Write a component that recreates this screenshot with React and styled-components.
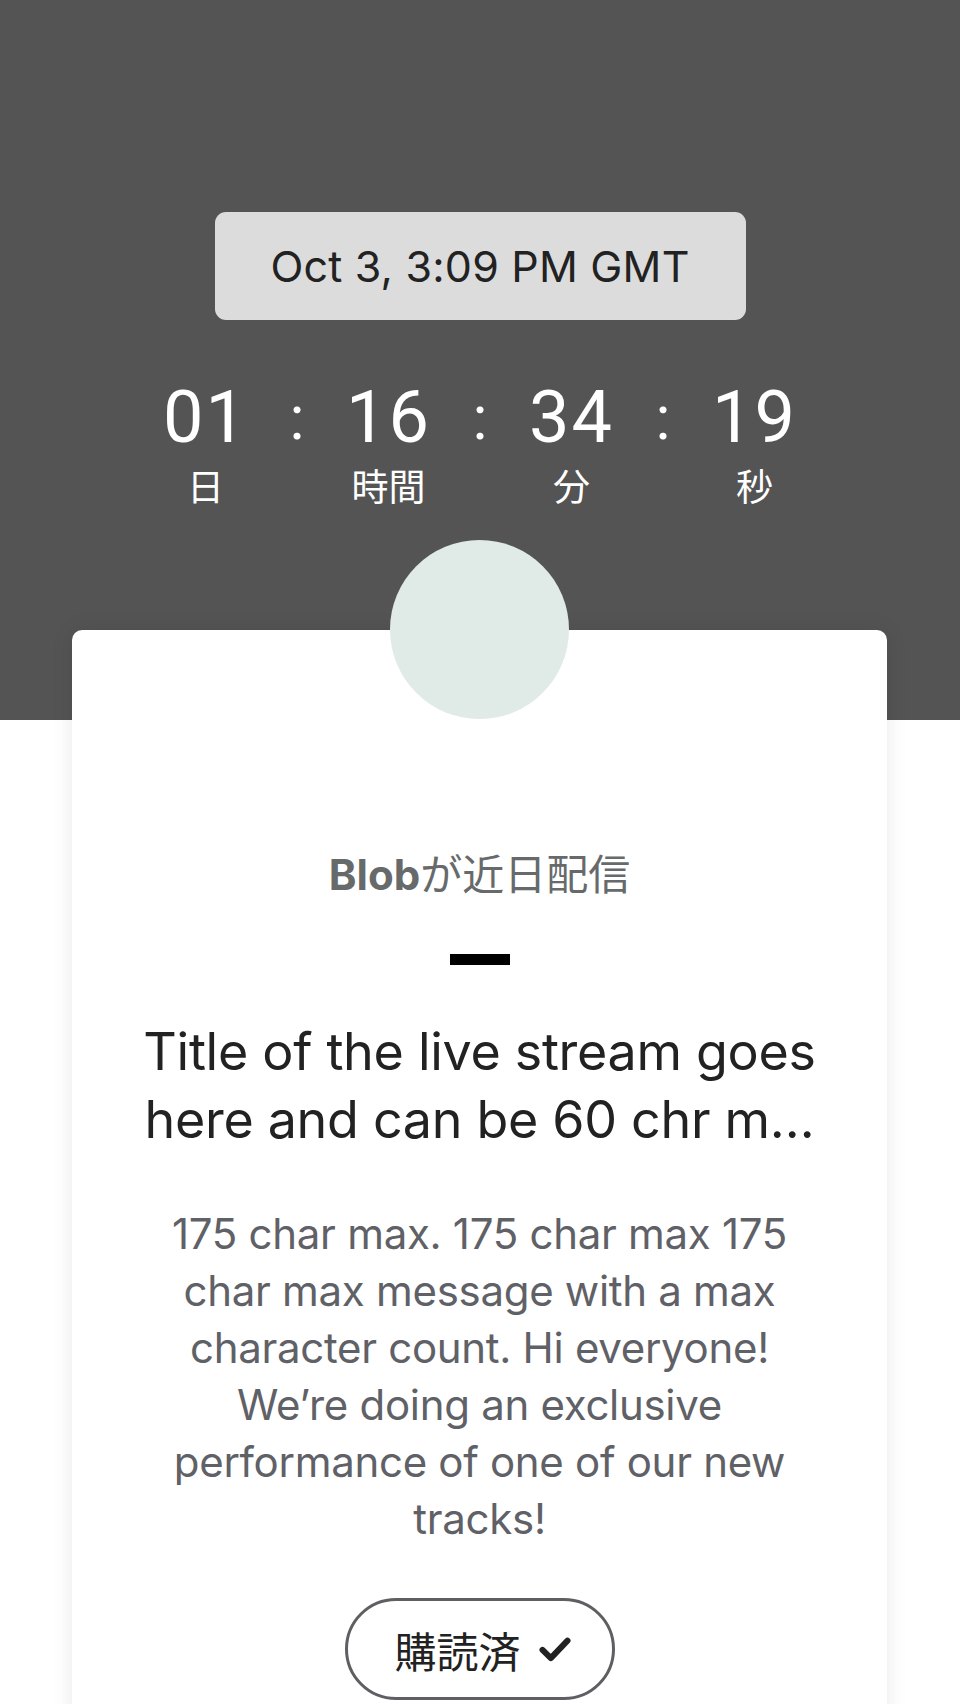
import styled, { createGlobalStyle } from "styled-components";

const GlobalStyle = createGlobalStyle`
body{
margin:0;
background:#fff;
font-family:Inter, "Noto Sans CJK JP", sans-serif;
}
`;
const Page = styled.div`
width:960px;
height:1704px;
overflow:hidden;
position:relative;
`;
const Header = styled.div`
background:#545454;
height:720px;
padding-top:212px;
box-sizing:border-box;
display:flex;
flex-direction:column;
align-items:center;
`;
const DatePill = styled.div`
width:531px;
height:108px;
background:#dcdcdc;
border-radius:11px;
display:flex;
align-items:center;
justify-content:center;
font-size:43px;
color:#222;
letter-spacing:0.2px;
`;
const Countdown = styled.div`
display:flex;
margin-top:62px;
color:#fff;
`;
const Unit = styled.div`
width:120px;
display:flex;
flex-direction:column;
align-items:center;
`;
const Num = styled.div`
font-family:Roboto, sans-serif;
font-size:72px;
line-height:72px;
letter-spacing:2px;
`;
const Label = styled.div`
font-family:"Noto Sans CJK JP", sans-serif;
font-size:37px;
line-height:46px;
margin-top:8px;
`;
const Colon = styled.div`
width:63px;
text-align:center;
font-family:Roboto, sans-serif;
font-size:62px;
line-height:72px;
`;
const Card = styled.div`
position:absolute;
top:630px;
left:72px;
width:815px;
height:1200px;
background:#fff;
border-radius:10px;
box-shadow:0 0 22px rgba(0,0,0,0.09);
display:flex;
flex-direction:column;
align-items:center;
`;
const Avatar = styled.div`
width:179px;
height:179px;
border-radius:50%;
background:#e0ebe7;
margin-top:-90px;
`;
const Host = styled.div`
margin-top:128px;
font-family:"Noto Sans CJK JP", sans-serif;
font-size:42px;
line-height:50px;
color:#676a6b;
b{
font-family:Inter, sans-serif;
font-weight:700;
}
`;
const Dash = styled.div`
width:60px;
height:11px;
background:#000;
margin-top:54px;
`;
const Title = styled.h1`
margin:53px 0 0;
width:720px;
font-weight:400;
font-size:52px;
line-height:68px;
color:#222;
text-align:center;
letter-spacing:-0.3px;
`;
const Desc = styled.p`
margin:51px 0 0;
width:660px;
font-size:42px;
line-height:57px;
color:#606167;
text-align:center;
letter-spacing:-0.3px;
`;
const SubButton = styled.button`
margin-top:51px;
width:270px;
height:102px;
padding:0 0 0 10px;
border:3px solid #5e5f63;
border-radius:51px;
background:#fff;
display:flex;
align-items:center;
justify-content:center;
gap:14px;
font-family:"Noto Sans CJK JP", sans-serif;
font-size:42px;
color:#222;
`;

export default function App() {
    const parts = [["01", "日"], ["16", "時間"], ["34", "分"], ["19", "秒"]];
    return (
        <Page>
            <GlobalStyle />
            <Header>
                <DatePill>Oct 3, 3:09 PM GMT</DatePill>
                <Countdown>
                    {parts.map(([n, l], i) => (
                        <>
                            {i > 0 && <Colon key={"c" + i}>:</Colon>}
                            <Unit key={l}>
                                <Num>{n}</Num>
                                <Label>{l}</Label>
                            </Unit>
                        </>
                    ))}
                </Countdown>
            </Header>
            <Card>
                <Avatar />
                <Host><b>Blob</b>が近日配信</Host>
                <Dash />
                <Title>Title of the live stream goes here and can be 60 chr m…</Title>
                <Desc>175 char max. 175 char max 175 char max message with a max character count. Hi everyone! We’re doing an exclusive performance of one of our new tracks!</Desc>
                <SubButton>
                    購読済
                    <svg width="40" height="40" viewBox="0 0 24 24" fill="none" stroke="#222" strokeWidth="3.6" strokeLinecap="round" strokeLinejoin="round">
                        <polyline points="4.5 12.5 9.5 17.5 19.5 7" />
                    </svg>
                </SubButton>
            </Card>
        </Page>
    );
}
